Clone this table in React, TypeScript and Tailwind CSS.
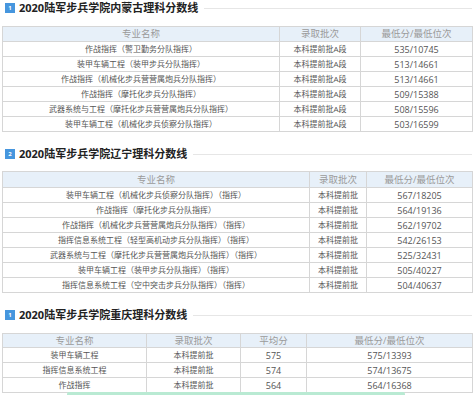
import React from 'react';

type Section = {
  no: string;
  title: string;
  cols: { label: string; w: number }[];
  rows: string[][];
  headH: string;
  mt: string;
};

const sections: Section[] = [
  {
    no: '1',
    title: '2020陆军步兵学院内蒙古理科分数线',
    cols: [
      { label: '专业名称', w: 277 },
      { label: '录取批次', w: 81 },
      { label: '最低分/最低位次', w: 112 },
    ],
    rows: [
      ['作战指挥（警卫勤务分队指挥）', '本科提前批A段', '535/10745'],
      ['装甲车辆工程（装甲步兵分队指挥）', '本科提前批A段', '513/14661'],
      ['作战指挥（机械化步兵营营属炮兵分队指挥）', '本科提前批A段', '513/14661'],
      ['作战指挥（摩托化步兵分队指挥）', '本科提前批A段', '509/15388'],
      ['武器系统与工程（摩托化步兵营营属炮兵分队指挥）', '本科提前批A段', '508/15596'],
      ['装甲车辆工程（机械化步兵侦察分队指挥）', '本科提前批A段', '503/16599'],
    ],
    headH: 'h-[15px]',
    mt: 'mt-[12px]',
  },
  {
    no: '2',
    title: '2020陆军步兵学院辽宁理科分数线',
    cols: [
      { label: '专业名称', w: 307 },
      { label: '录取批次', w: 57 },
      { label: '最低分/最低位次', w: 106 },
    ],
    rows: [
      ['装甲车辆工程（机械化步兵侦察分队指挥）（指挥）', '本科提前批', '567/18205'],
      ['作战指挥（摩托化步兵分队指挥）', '本科提前批', '564/19136'],
      ['作战指挥（机械化步兵营营属炮兵分队指挥）（指挥）', '本科提前批', '562/19702'],
      ['指挥信息系统工程（轻型高机动步兵分队指挥）（指挥）', '本科提前批', '542/26153'],
      ['武器系统与工程（摩托化步兵营营属炮兵分队指挥）（指挥）', '本科提前批', '525/32431'],
      ['装甲车辆工程（装甲步兵分队指挥）（指挥）', '本科提前批', '505/40227'],
      ['指挥信息系统工程（空中突击步兵分队指挥）（指挥）', '本科提前批', '504/40637'],
    ],
    headH: 'h-[16px]',
    mt: 'mt-[11px]',
  },
  {
    no: '1',
    title: '2020陆军步兵学院重庆理科分数线',
    cols: [
      { label: '专业名称', w: 144 },
      { label: '录取批次', w: 94 },
      { label: '平均分', w: 66 },
      { label: '最低分/最低位次', w: 166 },
    ],
    rows: [
      ['装甲车辆工程', '本科提前批', '575', '575/13393'],
      ['指挥信息系统工程', '本科提前批', '574', '574/13675'],
      ['作战指挥', '本科提前批', '564', '564/16368'],
    ],
    headH: 'h-[14px]',
    mt: 'mt-[12px]',
  },
];

const font = { fontFamily: '"Open Sans", "Noto Sans CJK SC", sans-serif' };

function Title({ no, text }: { no: string; text: string }) {
  return (
    <div className="flex items-center h-[12px] pl-[5px] pr-[2px]">
      <span className="w-[10px] h-[10px] bg-[#4696de] text-white text-[6px] leading-[10px] text-center font-bold shrink-0">
        {no}
      </span>
      <span className="ml-[4px] text-[11px] font-bold text-[#222] leading-[12px] whitespace-nowrap">
        {text}
      </span>
      <span className="flex-1 ml-[6px] h-px bg-[#e6e6e6]" />
    </div>
  );
}

function ScoreTable({ s }: { s: Section }) {
  return (
    <table className={`${s.mt} ml-[2px] w-[470px] table-fixed border-collapse border border-[#d6d6d6]`}>
      <colgroup>
        {s.cols.map((c, i) => (
          <col key={i} style={{ width: c.w }} />
        ))}
      </colgroup>
      <thead>
        <tr className={`${s.headH} bg-[#e7f0f9]`}>
          {s.cols.map((c, i) => (
            <th key={i} className="p-0 font-normal text-[9.5px] text-[#9a9a9a] border border-[#d6d6d6] leading-none">
              {c.label}
            </th>
          ))}
        </tr>
      </thead>
      <tbody>
        {s.rows.map((r, ri) => (
          <tr key={ri} className="h-[15px]">
            {r.map((cell, ci) => (
              <td
                key={ci}
                className={`p-0 text-center whitespace-nowrap overflow-hidden border border-[#d6d6d6] leading-none text-[#555] ${
                  /^[0-9/]+$/.test(cell) ? 'text-[9px]' : 'text-[8px]'
                }`}
              >
                {cell}
              </td>
            ))}
          </tr>
        ))}
      </tbody>
    </table>
  );
}

export default function App() {
  return (
    <div className="relative w-[474px] h-[395px] bg-white overflow-hidden pt-[2px]" style={font}>
      {sections.map((s, i) => (
        <div key={i} className={i === 0 ? '' : 'mt-[16px]'}>
          <Title no={s.no} text={s.title} />
          <ScoreTable s={s} />
        </div>
      ))}
      {/* floating button peeking in at the bottom */}
      <div className="absolute left-[67px] bottom-0 w-[338px] h-[3px] bg-[#b9ead3] rounded-t-[2px]" />
    </div>
  );
}
